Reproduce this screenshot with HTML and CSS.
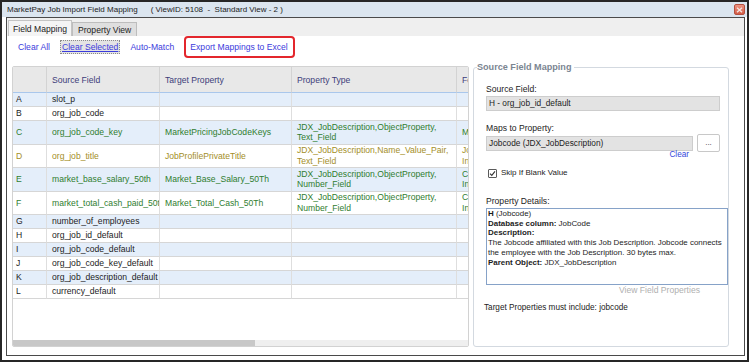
FILE: index.html
```html
<!DOCTYPE html>
<html lang="en">
<head>
  <meta charset="UTF-8">
  <title>MarketPay Job Import Field Mapping</title>
  <link rel="stylesheet" href="styles.css">
</head>
<body>
  <div class="window">
    <div class="titlebar">
      <span class="title">MarketPay Job Import Field Mapping</span>
      <span class="title-view">( ViewID: 5108  -  Standard View - 2 )</span>
      <span class="close-btn">
        <svg width="7" height="6" viewBox="0 0 7 6"><path d="M1 0.8 L6 5.2 M6 0.8 L1 5.2" stroke="#f4e6e2" stroke-width="1.4"/></svg>
      </span>
    </div>

    <div class="frame">
      <div class="tabs">
        <div class="tab active">Field Mapping</div>
        <div class="tab">Property View</div>
      </div>

      <div class="toolbar">
        <a class="link">Clear All</a>
        <a class="link focused">Clear Selected</a>
        <a class="link">Auto-Match</a>
        <a class="link marked">Export Mappings to Excel</a>
      </div>

      <div class="main">
        <div class="grid">
          <div class="grid-body">
            <table class="mapping-table">
              <colgroup>
                <col class="col-key">
                <col class="col-source">
                <col class="col-target">
                <col class="col-type">
                <col class="col-format">
              </colgroup>
              <thead>
                <tr>
                  <th></th>
                  <th>Source Field</th>
                  <th>Target Property</th>
                  <th>Property Type</th>
                  <th>Format</th>
                </tr>
              </thead>
              <tbody>
                <tr class="single">
                  <td>A</td><td>slot_p</td><td></td><td></td><td></td>
                </tr>
                <tr class="single">
                  <td>B</td><td>org_job_code</td><td></td><td></td><td></td>
                </tr>
                <tr class="double mapped">
                  <td>C</td><td>org_job_code_key</td><td>MarketPricingJobCodeKeys</td>
                  <td>JDX_JobDescription,ObjectProperty,<br>Text_Field</td><td>MarketPricing</td>
                </tr>
                <tr class="double private">
                  <td>D</td><td>org_job_title</td><td>JobProfilePrivateTitle</td>
                  <td>JDX_JobDescription,Name_Value_Pair,<br>Text_Field</td><td>JobProfile<br>Information</td>
                </tr>
                <tr class="double mapped">
                  <td>E</td><td>market_base_salary_50th</td><td>Market_Base_Salary_50Th</td>
                  <td>JDX_JobDescription,ObjectProperty,<br>Number_Field</td><td>Compensation<br>Integer</td>
                </tr>
                <tr class="double mapped">
                  <td>F</td><td>market_total_cash_paid_50th</td><td>Market_Total_Cash_50Th</td>
                  <td>JDX_JobDescription,ObjectProperty,<br>Number_Field</td><td>Compensation<br>Integer</td>
                </tr>
                <tr class="single">
                  <td>G</td><td>number_of_employees</td><td></td><td></td><td></td>
                </tr>
                <tr class="single">
                  <td>H</td><td>org_job_id_default</td><td></td><td></td><td></td>
                </tr>
                <tr class="single">
                  <td>I</td><td>org_job_code_default</td><td></td><td></td><td></td>
                </tr>
                <tr class="single">
                  <td>J</td><td>org_job_code_key_default</td><td></td><td></td><td></td>
                </tr>
                <tr class="single">
                  <td>K</td><td>org_job_description_default</td><td></td><td></td><td></td>
                </tr>
                <tr class="single">
                  <td>L</td><td>currency_default</td><td></td><td></td><td></td>
                </tr>
              </tbody>
            </table>
          </div>
          <div class="hscroll"><div class="hscroll-thumb"></div></div>
        </div>

        <fieldset class="mapping-box">
          <legend>Source Field Mapping</legend>

          <div class="field-label">Source Field:</div>
          <div class="text-input readonly">H - org_job_id_default</div>

          <div class="field-label">Maps to Property:</div>
          <div class="property-row">
            <div class="text-input readonly property-input">Jobcode (JDX_JobDescription)</div>
            <div class="browse-btn">...</div>
          </div>
          <div class="clear-link">Clear</div>

          <div class="check-row">
            <span class="checkbox">
              <svg width="7" height="7" viewBox="0 0 7 7"><path d="M1 3.6 L2.8 5.4 L6 1.4" fill="none" stroke="#333" stroke-width="1.1"/></svg>
            </span>
            <span class="check-text">Skip If Blank Value</span>
          </div>

          <div class="field-label details-label">Property Details:</div>
          <div class="details-box">
            <div><b>H</b> (Jobcode)</div>
            <div><b>Database column:</b> JobCode</div>
            <div><b>Description:</b></div>
            <div>The Jobcode affiliated with this Job Description. Jobcode connects</div>
            <div>the employee with the Job Description. 30 bytes max.</div>
            <div><b>Parent Object:</b> JDX_JobDescription</div>
          </div>
          <div class="view-props">View Field Properties</div>

          <div class="required-note">Target Properties must include: jobcode</div>
        </fieldset>
      </div>
    </div>
  </div>
</body>
</html>
```

FILE: styles.css
```css
body {
  margin: 0;
  font-family: "Liberation Sans", Arial, sans-serif;
  font-size: 8.6px;
  color: #1c1c1c;
  background: #fff;
}
.window {
  width: 749px;
  height: 362px;
  box-sizing: border-box;
  border: 2px solid #262626;
  background: #fff;
  display: flex;
  flex-direction: column;
}
.titlebar {
  flex: none;
  height: 15px;
  display: flex;
  align-items: center;
  padding: 0 2px 0 5px;
  background: #dbe5ef;
  font-size: 8px;
  color: #222;
  white-space: pre;
}
.title-view {
  margin-left: 13px;
}
.close-btn {
  margin-left: auto;
  width: 11px;
  height: 11px;
  box-sizing: border-box;
  border: 1px solid #b4503f;
  border-radius: 2px;
  background: linear-gradient(#ee9482, #d35c47);
  display: flex;
  align-items: center;
  justify-content: center;
}
.frame {
  flex: 1;
  min-height: 0;
  margin: 0 2px 4px 4px;
  border: 1px solid #4a4a4a;
  display: flex;
  flex-direction: column;
}

/* tabs */
.tabs {
  flex: none;
  height: 18px;
  display: flex;
  align-items: flex-end;
  padding-left: 1px;
  background: #efefef;
}
.tab {
  height: 14px;
  box-sizing: border-box;
  padding: 0 5px;
  border: 1px solid #bdbdbd;
  border-bottom: none;
  background: #dfdfdf;
  display: flex;
  align-items: center;
  color: #222;
}
.tab.active {
  height: 16px;
  padding: 0 4px;
  background: #f4f4f4;
  border-color: #c4c4c4;
}

/* link row */
.toolbar {
  flex: none;
  height: 22px;
  display: flex;
  align-items: center;
  gap: 10px;
  padding-left: 11px;
}
.link {
  color: #3b3bdc;
  cursor: pointer;
}
.link.focused {
  padding: 1px 1px;
  background: #e4e4e4;
  border: 1px dotted #8a8a8a;
  text-decoration: underline;
}
.link.marked {
  padding: 4px 5px 4px 4px;
  border: 2px solid #e3262c;
  border-radius: 4px;
}

.main {
  flex: 1;
  display: flex;
  gap: 4px;
  margin-top: 4px;
  padding-left: 5px;
}

/* grid */
.grid {
  width: 457px;
  height: 281px;
  margin-top: 4px;
  box-sizing: border-box;
  border: 1px solid #d2d2d2;
  border-radius: 2px;
  display: flex;
  flex-direction: column;
  overflow: hidden;
}
.grid-body {
  flex: 1;
  overflow: hidden;
}
.hscroll {
  flex: none;
  height: 6px;
  background: #efefef;
}
.hscroll-thumb {
  width: 242px;
  height: 100%;
  background: #c8c8c8;
}
.mapping-table {
  table-layout: fixed;
  border-collapse: separate;
  border-spacing: 0;
  width: 564px;
}
.col-key { width: 34px; }
.col-source { width: 113px; }
.col-target { width: 132px; }
.col-type { width: 165px; }
.col-format { width: 120px; }
.mapping-table th {
  height: 25px;
  padding: 0 5px;
  text-align: left;
  font-weight: normal;
  color: #3d3d7a;
  background: #e8e8e8;
  border-right: 1px solid #d3d3d3;
  border-bottom: 1px solid #a9c7ec;
  white-space: nowrap;
  overflow: hidden;
}
.mapping-table td {
  padding: 0 5px;
  border-right: 1px solid #dedede;
  border-bottom: 1px solid #d6d6d6;
  white-space: nowrap;
  overflow: hidden;
  line-height: 10.5px;
  vertical-align: middle;
}
.mapping-table td:first-child {
  padding-left: 3px;
}
.mapping-table tr.single { height: 14px; }
.mapping-table tr.double { height: 23.5px; }
.mapping-table tbody tr:nth-child(odd) td {
  background: #e4eefa;
}
.mapping-table tr.mapped td { color: #2f7d2f; }
.mapping-table tr.private td { color: #a38e28; }

/* right side */
.mapping-box {
  width: 256px;
  height: 285px;
  box-sizing: border-box;
  margin: 0;
  padding: 0 8px 0 12px;
  min-width: 0;
  border: 1px solid #d3d9e0;
  border-radius: 3px;
}
.mapping-box legend {
  margin-left: -9px;
  padding: 0 3px 0 0;
  font-size: 9.1px;
  line-height: 10px;
  font-weight: bold;
  color: #7b8591;
}
.field-label {
  margin-top: 12px;
  height: 10px;
  line-height: 10px;
}
.text-input {
  margin-top: 2px;
  height: 15px;
  box-sizing: border-box;
  padding-left: 2px;
  border: 1px solid #cdcdcd;
  font-size: 8.3px;
  line-height: 13px;
  white-space: nowrap;
  overflow: hidden;
}
.text-input.readonly {
  background: #e3e3e3;
}
.property-row {
  margin-top: 1px;
  height: 18px;
  display: flex;
  align-items: center;
  gap: 4px;
}
.property-input {
  margin-top: 0;
  width: 207px;
}
.browse-btn {
  width: 23px;
  height: 18px;
  box-sizing: border-box;
  border: 1px solid #c8c8c8;
  border-radius: 2px;
  background: #fff;
  font-size: 8px;
  line-height: 15px;
  text-align: center;
  color: #333;
}
.clear-link {
  margin-top: -1px;
  height: 8px;
  padding-right: 31px;
  line-height: 8px;
  text-align: right;
  font-size: 8.2px;
  color: #3346dc;
}
.check-row {
  margin-top: 9px;
  height: 10px;
  display: flex;
  align-items: center;
  gap: 4px;
  padding-left: 2px;
}
.check-text {
  font-size: 8px;
  line-height: 10px;
}
.checkbox {
  width: 9px;
  height: 9px;
  box-sizing: border-box;
  border: 1px solid #5a5a5a;
  border-radius: 1px;
  background: #fff;
  display: flex;
  align-items: center;
  justify-content: center;
}
.details-label {
  margin-top: 18px;
}
.details-box {
  margin-top: 2px;
  width: 242px;
  height: 77px;
  box-sizing: border-box;
  padding: 0 1px;
  border: 1px solid #86a2c8;
  font-size: 7.95px;
  line-height: 9.7px;
  white-space: nowrap;
  overflow: hidden;
}
.view-props {
  height: 10px;
  line-height: 10px;
  padding-right: 20px;
  text-align: right;
  color: #b0b0b0;
}
.required-note {
  margin-top: 8px;
  margin-left: -2px;
  line-height: 10px;
  font-size: 8.2px;
  color: #222;
}
```
